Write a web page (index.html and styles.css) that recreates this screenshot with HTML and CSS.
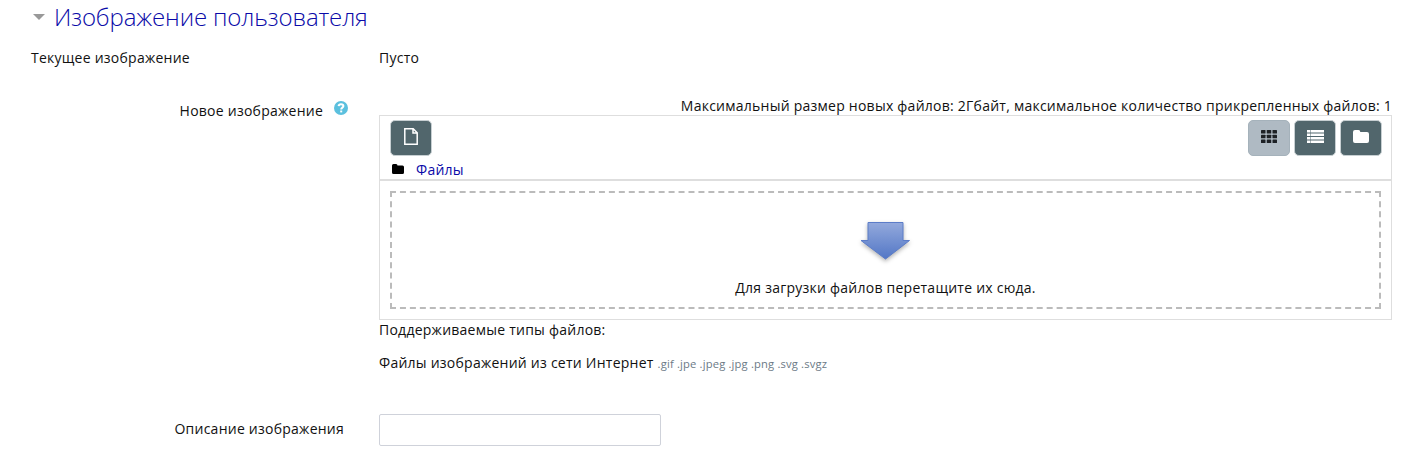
FILE: index.html
```html
<!DOCTYPE html>
<html lang="ru">
<head>
<meta charset="utf-8">
<title>Изображение пользователя</title>
<link rel="stylesheet" href="styles.css">
</head>
<body>
<form class="form">
  <h3 class="legend">
    <svg class="caret" width="12" height="6" viewBox="0 0 12 6"><path d="M0 0h12L6 6z"/></svg>
    <a class="legend-text">Изображение пользователя</a>
  </h3>

  <div class="row row-current">
    <div class="label label-left"><span class="t-current">Текущее изображение</span></div>
    <div class="field"><span class="t-empty">Пусто</span></div>
  </div>

  <div class="row row-new">
    <div class="label label-new">
      <span class="t-new">Новое изображение</span>
      <svg class="help" width="14" height="14" viewBox="0 0 14 14"><circle cx="7" cy="7" r="7" fill="#5bc0de"/><path d="M4.600 5.200C4.800 3.700 5.800 3.200 7 3.200c1.400 0 2.400.700 2.400 1.900C9.400 6.600 7.200 6.600 7.200 8.400" fill="none" stroke="#fff" stroke-width="2"/><path d="M6.200 9.500h2v1.900h-2z" fill="#fff"/></svg>
    </div>
    <div class="field">
      <div class="limits"><span class="t-limits">Максимальный размер новых файлов: 2Гбайт, максимальное количество прикрепленных файлов: 1</span></div>
      <div class="manager">
        <div class="toolbar">
          <div class="buttons">
            <button type="button" class="btn btn-add" aria-label="Добавить"><svg width="14" height="17" viewBox="0 0 14 17"><path d="M.8.8h8.400l4 4v11.400H.8zM9 .8v4.200h4.200" fill="none" stroke="#fff" stroke-width="1.500"/></svg></button>
            <div class="views">
              <button type="button" class="btn btn-active" aria-label="Значки"><svg width="16" height="13" viewBox="0 0 16 13" fill="#1d2125"><rect width="4.500" height="3.500" rx=".6"/><rect x="5.750" width="4.500" height="3.500" rx=".6"/><rect x="11.500" width="4.500" height="3.500" rx=".6"/><rect y="4.750" width="4.500" height="3.500" rx=".6"/><rect x="5.750" y="4.750" width="4.500" height="3.500" rx=".6"/><rect x="11.500" y="4.750" width="4.500" height="3.500" rx=".6"/><rect y="9.500" width="4.500" height="3.500" rx=".6"/><rect x="5.750" y="9.500" width="4.500" height="3.500" rx=".6"/><rect x="11.500" y="9.500" width="4.500" height="3.500" rx=".6"/></svg></button>
              <button type="button" class="btn" aria-label="Список"><svg width="17" height="13" viewBox="0 0 17 13" fill="#fff"><path d="M0 0h3v2.600H0zM3.500 0H17v2.600H3.500zM0 3.400h3V6H0zM3.500 3.400H17V6H3.500zM0 6.900h3v2.600H0zM3.500 6.900H17v2.600H3.500zM0 10.400h3V13H0zM3.500 10.400H17V13H3.500z"/></svg></button>
              <button type="button" class="btn" aria-label="Папки"><svg width="16" height="13" viewBox="0 0 16 13" fill="#fff"><path d="M2 0h3.500q1.800 0 1.800 2H14q2 0 2 2v7q0 2-2 2H2q-2 0-2-2V2Q0 0 2 0z"/></svg></button>
            </div>
          </div>
          <div class="path">
            <svg width="12" height="10" viewBox="0 0 16 13" preserveAspectRatio="none"><path d="M2 0h3.500q1.800 0 1.800 2H14q2 0 2 2v7q0 2-2 2H2q-2 0-2-2V2Q0 0 2 0z"/></svg>
            <a class="t-files">Файлы</a>
          </div>
        </div>
        <div class="content">
          <div class="dropzone">
            <svg class="arrow" width="58" height="48" viewBox="0 0 58 48">
              <defs><linearGradient id="blue" x1="0" y1="0" x2="0" y2="1"><stop offset="0" stop-color="#93a9dc"/><stop offset="1" stop-color="#5377c6"/></linearGradient></defs>
              <path d="M11 4.500h35v18h6.500L28.500 41 4 22.500h7z" fill="url(#blue)" stroke="#5b7cc8"/>
            </svg>
            <span class="t-drop">Для загрузки файлов перетащите их сюда.</span>
          </div>
        </div>
      </div>
      <p class="types"><span class="t-types">Поддерживаемые типы файлов:</span></p>
      <p class="formats"><span class="t-web">Файлы изображений из сети Интернет</span><small class="ext">.gif .jpe .jpeg .jpg .png .svg .svgz</small></p>
    </div>
  </div>

  <div class="row row-desc">
    <label class="label label-desc" for="desc"><span class="t-desc">Описание изображения</span></label>
    <div class="field"><input id="desc" class="input" type="text"></div>
  </div>
</form>
</body>
</html>
```
FILE: styles.css
```css
* { box-sizing: border-box; }
body {
  margin: 0;
  background: #fff;
  color: #111;
  font: 400 14px/20px "Open Sans", "Noto Sans", sans-serif;
  letter-spacing: .245px;
  white-space: nowrap;
}
.form { padding: 0 21px 0 31px; }
.legend {
  display: flex;
  align-items: center;
  gap: 9px;
  height: 34px;
  margin: 0;
  padding-left: 2px;
  font-size: 24px;
  font-weight: 300;
  letter-spacing: -.13px;
  line-height: 34px;
}
.caret { fill: #999; }
.legend-text { color: #0a0aa8; }
.row { display: grid; grid-template-columns: 348px 1013px; }
.row-current { padding-top: 14px; height: 62px; }
.row-new { height: 318px; }
.label { display: flex; justify-content: flex-end; }
.label-left { justify-content: flex-start; }
.label-new { gap: 11px; padding: 5px 31px 0 0; }
.help { margin-top: 0; }
.limits { display: flex; justify-content: flex-end; height: 19px; }
.manager { height: 205px; border: 1px solid #dedede; }
.toolbar { height: 65px; padding: 4px 9px 0 10px; border-bottom: 2px solid #dedede; }
.buttons { display: flex; justify-content: space-between; }
.views { display: flex; gap: 4px; }
.btn {
  display: flex;
  align-items: flex-start;
  justify-content: center;
  width: 42px;
  height: 36px;
  padding: 9px 0 0;
  border: 1px solid #c7cfd2;
  border-radius: 5px;
  background: #51666c;
}
.btn-add { padding-top: 7px; }
.btn-active { background: #afbac3; border-color: #a5b2bb; }
.path { display: flex; gap: 12px; padding: 4px 0 0 2px; }
.path svg { margin-top: 4px; }
.t-files { color: #0a0aa8; }
.content { padding: 10px; }
.dropzone {
  display: flex;
  flex-direction: column;
  align-items: center;
  height: 118px;
  padding-top: 25px;
  border: 2px dashed #bbb;
}
.arrow { filter: drop-shadow(0 2px 2px rgba(0, 0, 0, .3)); }
.t-drop { margin-top: 12px; }
.types { margin: 0; }
.formats { display: flex; align-items: baseline; gap: 4px; margin: 13px 0 0; }
.ext { font-size: 11.200px; letter-spacing: .17px; color: #6c7a86; }
.label-desc { padding: 5px 35px 0 0; }
.input {
  display: block;
  width: 282px;
  height: 32px;
  border: 1px solid #cfd2da;
  border-radius: 2px;
  background: #fff;
}
```
